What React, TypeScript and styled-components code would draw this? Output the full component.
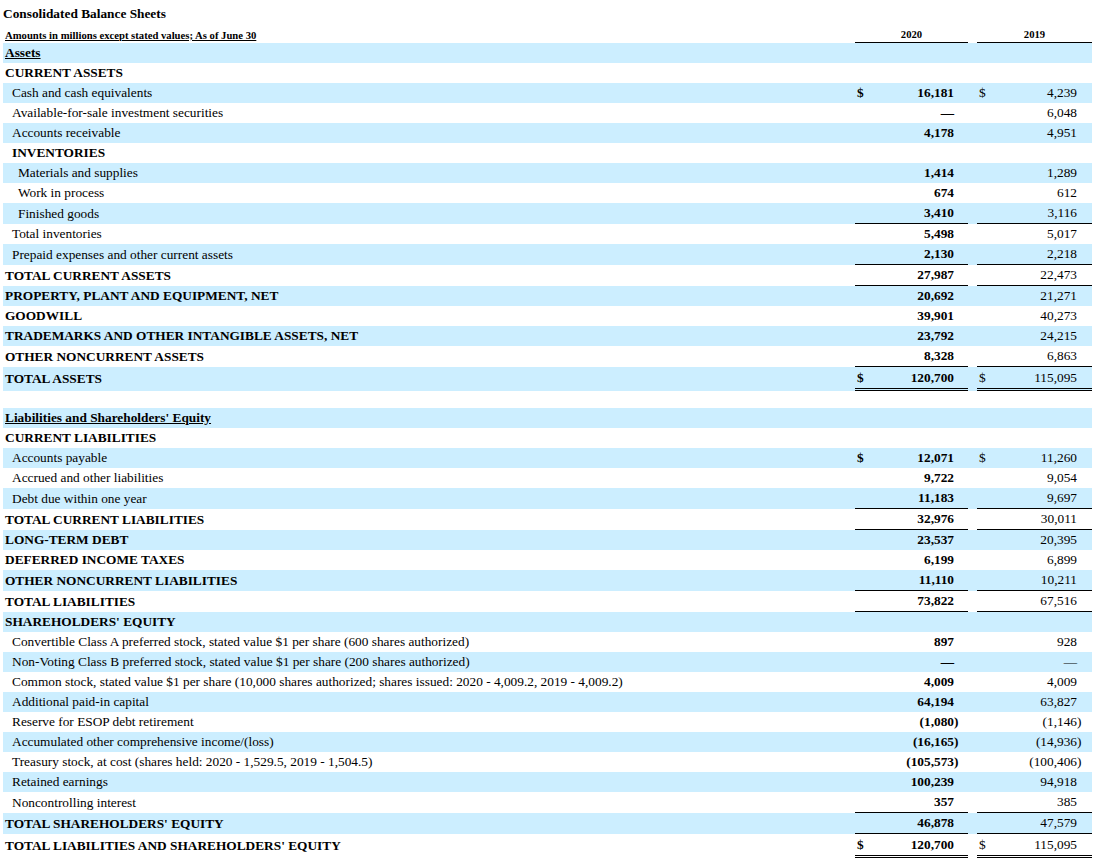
import React from "react"
import styled, { createGlobalStyle, css } from "styled-components"

type Kind = "heading" | "section" | "subsection" | "item" | "sub" | "blank"
type Rule = "single" | "double"

interface Line {
  label: string
  kind: Kind
  a?: string
  b?: string
  dollar?: boolean
  rule?: Rule
  tall?: boolean
}

const lines: Line[] = [
  { label: "Assets", kind: "heading" },
  { label: "CURRENT ASSETS", kind: "section" },
  { label: "Cash and cash equivalents", kind: "item", a: "16,181", b: "4,239", dollar: true },
  { label: "Available-for-sale investment securities", kind: "item", a: "—", b: "6,048" },
  { label: "Accounts receivable", kind: "item", a: "4,178", b: "4,951" },
  { label: "INVENTORIES", kind: "subsection" },
  { label: "Materials and supplies", kind: "sub", a: "1,414", b: "1,289" },
  { label: "Work in process", kind: "sub", a: "674", b: "612" },
  { label: "Finished goods", kind: "sub", a: "3,410", b: "3,116", rule: "single" },
  { label: "Total inventories", kind: "item", a: "5,498", b: "5,017" },
  { label: "Prepaid expenses and other current assets", kind: "item", a: "2,130", b: "2,218", rule: "single" },
  { label: "TOTAL CURRENT ASSETS", kind: "section", a: "27,987", b: "22,473", rule: "single" },
  { label: "PROPERTY, PLANT AND EQUIPMENT, NET", kind: "section", a: "20,692", b: "21,271" },
  { label: "GOODWILL", kind: "section", a: "39,901", b: "40,273" },
  { label: "TRADEMARKS AND OTHER INTANGIBLE ASSETS, NET", kind: "section", a: "23,792", b: "24,215" },
  { label: "OTHER NONCURRENT ASSETS", kind: "section", a: "8,328", b: "6,863", rule: "single" },
  { label: "TOTAL ASSETS", kind: "section", a: "120,700", b: "115,095", dollar: true, rule: "double", tall: true },
  { label: "", kind: "blank" },
  { label: "Liabilities and Shareholders' Equity", kind: "heading" },
  { label: "CURRENT LIABILITIES", kind: "section" },
  { label: "Accounts payable", kind: "item", a: "12,071", b: "11,260", dollar: true },
  { label: "Accrued and other liabilities", kind: "item", a: "9,722", b: "9,054" },
  { label: "Debt due within one year", kind: "item", a: "11,183", b: "9,697", rule: "single" },
  { label: "TOTAL CURRENT LIABILITIES", kind: "section", a: "32,976", b: "30,011", rule: "single" },
  { label: "LONG-TERM DEBT", kind: "section", a: "23,537", b: "20,395" },
  { label: "DEFERRED INCOME TAXES", kind: "section", a: "6,199", b: "6,899" },
  { label: "OTHER NONCURRENT LIABILITIES", kind: "section", a: "11,110", b: "10,211", rule: "single" },
  { label: "TOTAL LIABILITIES", kind: "section", a: "73,822", b: "67,516", rule: "single" },
  { label: "SHAREHOLDERS' EQUITY", kind: "section" },
  { label: "Convertible Class A preferred stock, stated value $1 per share (600 shares authorized)", kind: "item", a: "897", b: "928" },
  { label: "Non-Voting Class B preferred stock, stated value $1 per share (200 shares authorized)", kind: "item", a: "—", b: "—" },
  { label: "Common stock, stated value $1 per share (10,000 shares authorized; shares issued: 2020 - 4,009.2, 2019 - 4,009.2)", kind: "item", a: "4,009", b: "4,009" },
  { label: "Additional paid-in capital", kind: "item", a: "64,194", b: "63,827" },
  { label: "Reserve for ESOP debt retirement", kind: "item", a: "(1,080)", b: "(1,146)" },
  { label: "Accumulated other comprehensive income/(loss)", kind: "item", a: "(16,165)", b: "(14,936)" },
  { label: "Treasury stock, at cost (shares held: 2020 - 1,529.5, 2019 - 1,504.5)", kind: "item", a: "(105,573)", b: "(100,406)" },
  { label: "Retained earnings", kind: "item", a: "100,239", b: "94,918" },
  { label: "Noncontrolling interest", kind: "item", a: "357", b: "385", rule: "single" },
  { label: "TOTAL SHAREHOLDERS' EQUITY", kind: "section", a: "46,878", b: "47,579", rule: "single" },
  { label: "TOTAL LIABILITIES AND SHAREHOLDERS' EQUITY", kind: "section", a: "120,700", b: "115,095", dollar: true, rule: "double", tall: true },
]

const GlobalStyle = createGlobalStyle`
  body {
    margin: 0;
    background: #fff;
    color: #000;
    font-family: "Liberation Serif", "Times New Roman", serif;
  }
`

const Sheet = styled.div`
  width: 1089px;
  margin-left: 3px;
  font-size: 13.33px;
`

const Title = styled.div`
  padding-top: 5px;
  height: 18px;
  line-height: 18px;
  font-weight: bold;
`

const Row = styled.div<{ $shaded?: boolean; $height: number }>`
  display: grid;
  grid-template-columns: 1fr 113px 9px 115px;
  height: ${(p) => p.$height}px;
  background: ${(p) => (p.$shaded ? "#cceeff" : "transparent")};
`

const HeaderRow = styled(Row)`
  font-size: 10.67px;
  font-weight: bold;
  align-items: end;
`

const Caption = styled.span`
  padding: 0 0 2px 2px;
  line-height: 12px;
  text-decoration: underline;
`

const Year = styled.span`
  text-align: center;
  line-height: 12px;
  padding-bottom: 2px;
  border-bottom: 1px solid #000;
`

const indents: Record<Kind, number> = {
  heading: 2,
  section: 2,
  subsection: 9,
  item: 9,
  sub: 15,
  blank: 0,
}

const Label = styled.div<{ $kind: Kind }>`
  display: flex;
  align-items: center;
  padding-left: ${(p) => indents[p.$kind]}px;
  white-space: nowrap;
  font-weight: ${(p) =>
    p.$kind === "heading" || p.$kind === "section" || p.$kind === "subsection" ? "bold" : "normal"};
  ${(p) =>
    p.$kind === "heading" &&
    css`
      text-decoration: underline;
    `}
`

const Value = styled.div<{ $bold?: boolean; $rule?: Rule; $right: number }>`
  display: flex;
  align-items: center;
  justify-content: space-between;
  padding: 0 ${(p) => p.$right}px 0 2px;
  font-weight: ${(p) => (p.$bold ? "bold" : "normal")};
  border-bottom: ${(p) =>
    p.$rule === "double" ? "3px double #000" : p.$rule === "single" ? "1px solid #000" : "none"};
`

const Figure = styled.span`
  margin-left: auto;
  white-space: nowrap;
`

const Paren = styled.span`
  display: inline-block;
  width: 0;
  overflow: visible;
`

const Amount: React.FC<{ text?: string }> = ({ text }) => {
  if (!text) return null
  if (text.endsWith(")")) {
    return (
      <Figure>
        {text.slice(0, -1)}
        <Paren>)</Paren>
      </Figure>
    )
  }
  return <Figure>{text}</Figure>
}

const ruleWidth = (r?: Rule) => (r === "double" ? 3 : r === "single" ? 1 : 0)
const rowHeight = (l: Line) =>
  l.kind === "blank" ? 17 : (l.tall ? 21 : 20) + ruleWidth(l.rule)

export default function App() {
  return (
    <>
      <GlobalStyle />
      <Sheet>
        <Title>Consolidated Balance Sheets</Title>
        <HeaderRow $height={20}>
          <Caption>Amounts in millions except stated values; As of June 30</Caption>
          <Year>2020</Year>
          <span />
          <Year>2019</Year>
        </HeaderRow>
        {lines.map((l, i) => (
          <Row key={i} $shaded={i % 2 === 0} $height={rowHeight(l)}>
            <Label $kind={l.kind}>{l.label}</Label>
            <Value $bold $rule={l.rule} $right={14}>
              {l.dollar && <span>$</span>}
              <Amount text={l.a} />
            </Value>
            <span />
            <Value $rule={l.rule} $right={15}>
              {l.dollar && <span>$</span>}
              <Amount text={l.b} />
            </Value>
          </Row>
        ))}
      </Sheet>
    </>
  )
}
